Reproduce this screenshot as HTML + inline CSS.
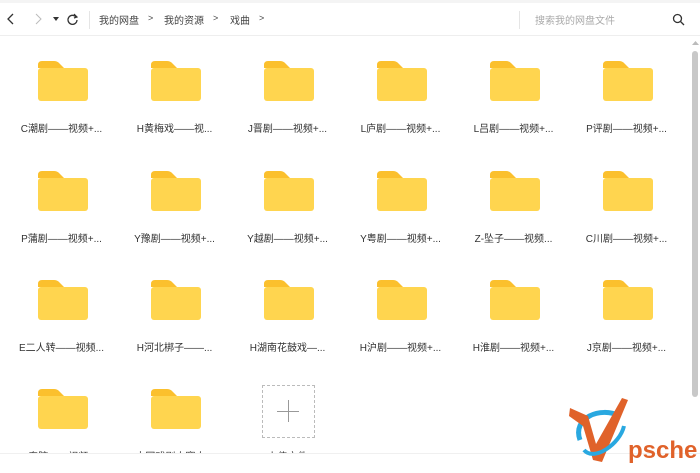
<!DOCTYPE html><html><head><meta charset="utf-8"><style>
*{margin:0;padding:0;box-sizing:border-box}
body{width:700px;height:473px;background:#fff;position:relative;overflow:hidden;font-family:"Liberation Sans","Noto Sans CJK SC",sans-serif;color:#333}
.top{position:absolute;left:0;top:0;width:700px;height:36px;border-bottom:1px solid #eee;border-top:3px solid #f4f4f4}
.t{position:absolute;font-size:10px;top:9px;color:#444}
.it{position:absolute;width:113px;text-align:center}
.it .f{position:absolute;left:38px;width:50px;height:40px}
.it .l{position:absolute;left:5px;width:113px;font-size:10px;color:#333;white-space:nowrap}
</style></head><body>
<div class="top">
<svg style="position:absolute;left:6px;top:10px" width="10" height="12"><path d="M7 1 L2 6 L7 11" stroke="#333" stroke-width="1.3" fill="none"/></svg>
<svg style="position:absolute;left:34px;top:10px" width="10" height="12"><path d="M2 1 L7 6 L2 11" stroke="#bbb" stroke-width="1" fill="none"/></svg>
<svg style="position:absolute;left:53px;top:14px" width="7" height="5"><path d="M0 0 L6 0 L3 4Z" fill="#333"/></svg>
<svg style="position:absolute;left:66px;top:10px" width="13" height="13"><path d="M10 4 A4.5 4.5 0 1 0 11 7" stroke="#333" stroke-width="1.3" fill="none"/><path d="M8 1 L11 4 L8 5" stroke="#333" stroke-width="1.2" fill="none"/></svg>
<div style="position:absolute;left:89px;top:8px;width:1px;height:18px;background:#e5e5e5"></div>
<span class="t" style="left:99px">我的网盘</span><span class="t" style="left:148px;top:10px;font-size:9px">&gt;</span>
<span class="t" style="left:164px">我的资源</span><span class="t" style="left:213px;top:10px;font-size:9px">&gt;</span>
<span class="t" style="left:230px">戏曲</span><span class="t" style="left:259px;top:10px;font-size:9px">&gt;</span>
<div style="position:absolute;left:519px;top:8px;width:1px;height:18px;background:#e5e5e5"></div>
<span class="t" style="left:535px;color:#aaa">搜索我的网盘文件</span>
<svg style="position:absolute;left:672px;top:10px" width="13" height="13"><circle cx="5.5" cy="5.5" r="4" stroke="#333" stroke-width="1.3" fill="none"/><path d="M8.5 8.5 L12 12" stroke="#333" stroke-width="1.3"/></svg>
</div>
<svg width="0" height="0" style="position:absolute"><defs><symbol id="fd" viewBox="0 0 50 40"><path d="M0 4 Q0 0 4 0 H16 Q19 0 21 2 L26 7 H0Z" fill="#fbc02d"/><rect x="0" y="7" width="50" height="33" rx="3" fill="#ffd54f"/></symbol></defs></svg>
<div id="g"></div>
<div style="position:absolute;left:262px;top:385px;width:53px;height:53px;border:1px dashed #bbb"></div>
<div style="position:absolute;left:277px;top:411px;width:22px;height:1px;background:#999"></div>
<div style="position:absolute;left:288px;top:400px;width:1px;height:22px;background:#999"></div>
<div style="position:absolute;left:0;top:453px;width:700px;height:20px;background:#fff;border-top:1px solid #f0f0f0"></div>
<div style="position:absolute;left:692px;top:51px;width:6px;height:346px;background:#c8c8c8;border-radius:3px"></div>
<svg style="position:absolute;left:692px;top:41px" width="7" height="5"><path d="M0 4 L3.5 0 L7 4Z" fill="#bbb"/></svg>
<svg style="position:absolute;left:566px;top:396px" width="134" height="72">
<path d="M14 44 C6 22 34 10 54 20" stroke="#29a8e0" stroke-width="5" fill="none"/>
<path d="M4 12 L22 20 L30 48 L56 2 L62 4 L36 66 L27 64 L17 30 L3 20Z" fill="#e0622a"/>
<path d="M18 54 C28 66 54 48 58 30" stroke="#29a8e0" stroke-width="4" fill="none"/>
<text x="62" y="62" font-family="Liberation Sans" font-weight="bold" font-size="24" fill="#e0622a">psche</text>
</svg>
<script>
var L=[["C潮剧——视频+...","H黄梅戏——视...","J晋剧——视频+...","L庐剧——视频+...","L吕剧——视频+...","P评剧——视频+..."],["P蒲剧——视频+...","Y豫剧——视频+...","Y越剧——视频+...","Y粤剧——视频+...","Z-坠子——视频...","C川剧——视频+..."],["E二人转——视频...","H河北梆子——...","H湖南花鼓戏—...","H沪剧——视频+...","H淮剧——视频+...","J京剧——视频+..."],["Q秦腔——视频+...","中国戏剧大赛大...","上传文件"]];
var tops=[61,171,280,389],h="";
L.forEach(function(r,i){r.forEach(function(t,j){var x=j*113;
if(!(i==3&&j==2))h+='<div class="it" style="left:'+x+'px;top:'+tops[i]+'px"><svg class="f" style="top:0" viewBox="0 0 50 40"><use href="#fd"/></svg></div>';
h+='<div class="it" style="left:'+x+'px;top:'+(tops[i]+59)+'px"><div class="l">'+t+'</div></div>';});});
document.getElementById("g").innerHTML=h;
</script>
</body></html>
